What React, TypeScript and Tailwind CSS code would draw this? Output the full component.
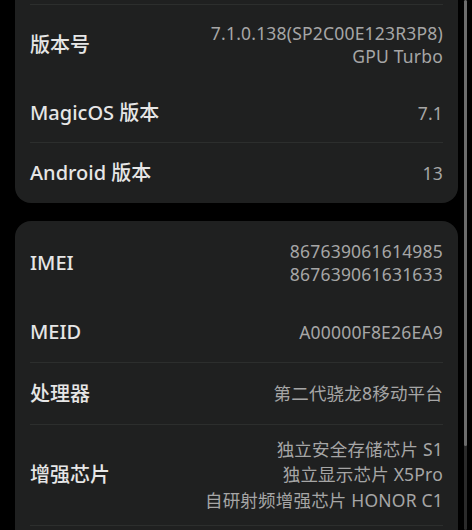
import React from "react";

type Row = {
  label: string;
  values: string[];
  h: string;
  lead: string;
  sep?: boolean;
};

const font = {
  fontFamily: '"Noto Sans", "Noto Sans CJK SC", sans-serif',
};

const InfoRow = ({ row }: { row: Row }) => (
  <>
    <div className={`flex items-center justify-between ${row.h}`}>
      <span className="text-[20px] font-medium text-[#e6e6e6] leading-[28px]">{row.label}</span>
      <div className={`flex flex-col items-end text-[17.5px] tracking-[0.2px] text-[#a6a6a6] ${row.lead}`}>
        {row.values.map((v) => (
          <span key={v}>{v}</span>
        ))}
      </div>
    </div>
    {row.sep && <div className="h-px bg-[#2c2e2d]" />}
  </>
);

const systemRows: Row[] = [
  { label: "版本号", values: ["7.1.0.138(SP2C00E123R3P8)", "GPU Turbo"], h: "h-[79px]", lead: "leading-[23px]" },
  { label: "MagicOS 版本", values: ["7.1"], h: "h-[58px]", lead: "leading-[23px]", sep: true },
  { label: "Android 版本", values: ["13"], h: "h-[60px]", lead: "leading-[23px]" },
];

const hardwareRows: Row[] = [
  { label: "IMEI", values: ["867639061614985", "867639061631633"], h: "h-[79px]", lead: "leading-[23px]" },
  { label: "MEID", values: ["A00000F8E26EA9"], h: "h-[60px]", lead: "leading-[23px]", sep: true },
  { label: "处理器", values: ["第二代骁龙8移动平台"], h: "h-[61px]", lead: "leading-[25px]", sep: true },
  {
    label: "增强芯片",
    values: ["独立安全存储芯片 S1", "独立显示芯片 X5Pro", "自研射频增强芯片 HONOR C1"],
    h: "h-[100px]",
    lead: "leading-[25.5px]",
    sep: true,
  },
];

export default function App() {
  return (
    <div className="relative w-[472px] h-[530px] overflow-hidden bg-black" style={font}>
      <div className="pl-[15px] pr-[14px]">
        {/* 上のカード（上端は画面外） */}
        <div className="rounded-b-[16px] bg-[#1f2020] px-[15px]">
          <div className="h-[4px]" />
          <div className="h-px bg-[#2c2e2d]" />
          {systemRows.map((r) => (
            <InfoRow key={r.label} row={r} />
          ))}
        </div>

        {/* ハードウェア情報カード（下端は画面外） */}
        <div className="mt-[18px] rounded-t-[16px] bg-[#1f2020] px-[15px] pt-[2px]">
          {hardwareRows.map((r) => (
            <InfoRow key={r.label} row={r} />
          ))}
          <div className="h-[40px]" />
        </div>
      </div>

      {/* スクロールバー */}
      <div className="absolute right-[5px] top-0 h-full w-[3px] rounded-full bg-[#2a2a2a]" />
      <div className="absolute right-[5px] top-0 h-[446px] w-[3px] rounded-full bg-[#6b6b6b]" />
    </div>
  );
}
